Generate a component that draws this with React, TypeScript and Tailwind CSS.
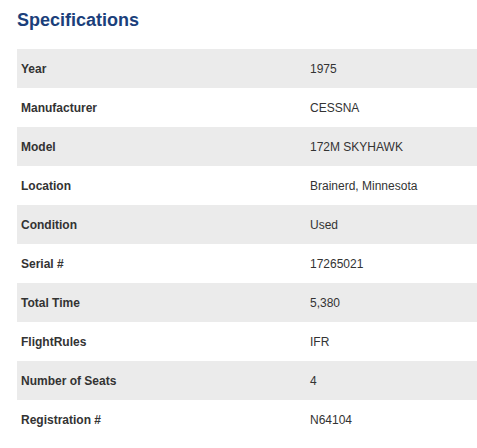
import React from "react";

const rows: [string, string][] = [
  ["Year", "1975"],
  ["Manufacturer", "CESSNA"],
  ["Model", "172M SKYHAWK"],
  ["Location", "Brainerd, Minnesota"],
  ["Condition", "Used"],
  ["Serial #", "17265021"],
  ["Total Time", "5,380"],
  ["FlightRules", "IFR"],
  ["Number of Seats", "4"],
  ["Registration #", "N64104"],
];

export default function App() {
  return (
    <div className="w-[477px] h-[448px] bg-white pl-[17px] pt-[11px] font-['Liberation_Sans',Arial,sans-serif] overflow-hidden">
      <h2 className="text-[18px] leading-[18px] font-bold text-[#1b3f7b] m-0">Specifications</h2>
      <div className="mt-[20px] w-[460px]">
        {rows.map(([k, v], i) => (
          <div
            key={k}
            className={`grid grid-cols-[289px_1fr] h-[39px] items-center text-[12px] text-[#333333] ${i % 2 === 0 ? "bg-[#ebebeb]" : "bg-white"}`}
          >
            <div className="pl-[4px] font-bold">{k}</div>
            <div className="pl-[4px]">{v}</div>
          </div>
        ))}
      </div>
    </div>
  );
}
